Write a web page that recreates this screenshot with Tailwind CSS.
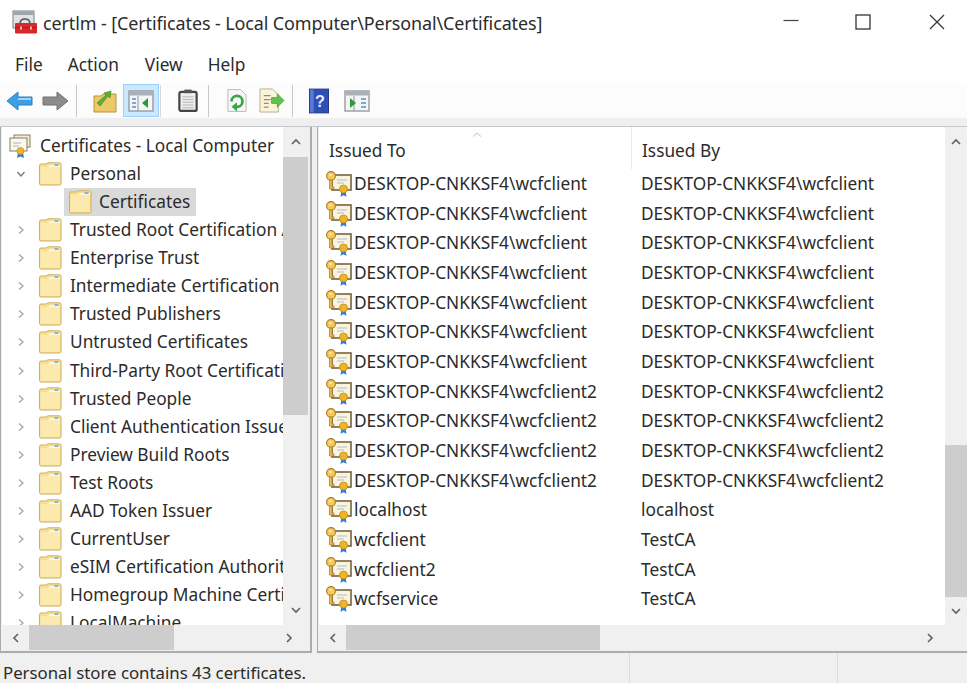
<!doctype html>
<html><head><meta charset="utf-8"><title>certlm</title>
<script src="https://cdn.jsdelivr.net/npm/@tailwindcss/browser@4"></script></head>
<body class="m-0 bg-white">
<svg width="0" height="0" class="absolute">
<defs>
<symbol id="folder" viewBox="0 0 24 24">
<path d="M1.5 3.5 Q1.5 2 3 2 H8 L10 0.8 H21.5 Q23 0.8 23 2.3 V21.5 Q23 23 21.5 23 H3 Q1.5 23 1.5 21.5 Z" fill="#f8de90" stroke="#d2ae63" stroke-width="1"/>
<path d="M2.5 6 H22 V22 H2.5 Z" fill="#fbe9ad"/>
<path d="M2.5 5 H10 L12 3 H22 V5.5 H2.5 Z" fill="#fff6d8"/>
<rect x="16.5" y="2" width="4" height="2" fill="#7cb8e0"/>
</symbol>
<symbol id="cert" viewBox="0 0 26 26">
<rect x="6" y="4" width="19" height="15" fill="#fbf4dd" stroke="#7d6c48" stroke-width="1.7"/>
<path d="M11 9 H21 M11 12 H18" stroke="#a9bdd6" stroke-width="1"/>
<circle cx="5" cy="5" r="4.4" fill="#f6c95c" stroke="#a87c22" stroke-width="1.1"/>
<circle cx="4.5" cy="4" r="1.1" fill="#fff3c4"/>
<path d="M3.5 9 V18 H8 V16 H6 V9 Z" fill="#eebd4e" stroke="#a07a24" stroke-width=".7"/>
<path d="M15.5 20 L14.5 25.8 L17.5 24.2 L20.5 25.8 L19.5 20 Z" fill="#2d7fd6"/>
<circle cx="17.5" cy="18" r="4" fill="#f0b428" stroke="#c08a18" stroke-width=".8"/>
</symbol>
<symbol id="chevr" viewBox="0 0 10 10"><path d="M3 1.5 L7 5 L3 8.5" fill="none" stroke="#a6a6a6" stroke-width="1.3"/></symbol>
<symbol id="pane" viewBox="0 0 26 24">
<rect x="1" y="2" width="24" height="20" fill="#f3f5f7" stroke="#8f959b" stroke-width="1.3"/>
<rect x="1.5" y="2.5" width="23" height="4" fill="#a9b0b7"/>
<path d="M10 7 V22" stroke="#8f959b" stroke-width="1"/>
</symbol>
</defs>
</svg>

<div class="w-[967px] h-[683px] overflow-hidden flex flex-col text-[#2b2b2b] text-[17.3px] leading-[22px] font-['Noto_Sans','Open_Sans',sans-serif]">
  <!-- title -->
  <header class="h-[45px] flex items-center shrink-0 bg-white">
    <svg class="ml-[12px] mt-[-1px] shrink-0" width="26" height="24" viewBox="0 0 26 24">
      <rect x="1" y="1" width="21" height="17" fill="#dfe3e6" stroke="#8d949a" stroke-width="1.2"/>
      <rect x="1.5" y="1.5" width="20" height="3.5" fill="#9ea5ab"/>
      <path d="M8 14 Q8 9 13 9 Q18 9 18 14" fill="none" stroke="#555" stroke-width="1.6"/>
      <rect x="3" y="13" width="22" height="10.5" rx="1" fill="#d8282c"/>
      <rect x="3" y="17" width="22" height="1" fill="#a81b1f"/>
      <rect x="8" y="16.5" width="2" height="3" fill="#f0c0a0"/><rect x="18" y="16.5" width="2" height="3" fill="#f0c0a0"/>
    </svg>
    <span class="ml-[5px] text-[17.95px] tracking-[-0.1px] whitespace-nowrap">certlm - [Certificates - Local Computer\Personal\Certificates]</span>
    <div class="ml-auto flex items-center mt-[-2px]">
      <svg class="mr-[56px]" width="16" height="16" viewBox="0 0 16 16"><path d="M0.5 6.5 H15.5" stroke="#444" stroke-width="1.2"/></svg>
      <svg class="mr-[58px]" width="16" height="16" viewBox="0 0 16 16"><rect x="1" y="1" width="14" height="14" fill="none" stroke="#333" stroke-width="1.3"/></svg>
      <svg class="mr-[22px]" width="16" height="16" viewBox="0 0 16 16"><path d="M1 1 L15 15 M15 1 L1 15" stroke="#333" stroke-width="1.2"/></svg>
    </div>
  </header>
  <!-- menu -->
  <nav class="h-[36px] flex items-center shrink-0 border-b-2 border-[#d4d4d4] box-content pt-[2px] mb-[-2px] relative">
    <span class="ml-[15px] mt-[-1px]">File</span><span class="ml-[25px] mt-[-1px]">Action</span><span class="ml-[26px] mt-[-1px]">View</span><span class="ml-[25px] mt-[-1px]">Help</span>
  </nav>
  <!-- toolbar -->
  <div class="h-[35px] flex items-center shrink-0 bg-[#fcfcfc] relative">
    <svg class="ml-[6px]" width="27" height="22" viewBox="0 0 27 22"><path d="M1 11 L12 2 V7 H26 V15 H12 V20 Z" fill="#3c9fe4" stroke="#2a7fc4" stroke-width="1"/><path d="M12 8 H25 V10 H12 Z" fill="#9fd4f6"/></svg>
    <svg class="ml-[9px]" width="27" height="22" viewBox="0 0 27 22"><path d="M26 11 L15 2 V7 H1 V15 H15 V20 Z" fill="#8b8b8b" stroke="#707070" stroke-width="1"/></svg>
    <div class="ml-[7px] w-px h-[32px] bg-[#c8c8c8]"></div>
    <svg class="ml-[16px]" width="24" height="24" viewBox="0 0 24 24"><path d="M1 7 H8 L10 5 H23 V23 H1 Z" fill="#edc868" stroke="#b7943e"/><path d="M4 14 L13 6 L11 4 L18 2 L17 9 L15 7 L7 17 Z" fill="#5fae3a" stroke="#3c8420" stroke-width=".6"/></svg>
    <div class="ml-[6px] w-[36px] h-[33px] bg-[#cce8ff] border border-[#99d1ff] flex items-center justify-center">
      <svg width="26" height="24"><use href="#pane"/><path d="M20 9 V19 L14 14 Z" fill="#2f9a3a"/><path d="M4 10 H8 M4 14 H8 M4 18 H8" stroke="#5a8fc0" stroke-width="1.6"/></svg>
    </div>
    <div class="ml-[1px] w-px h-[32px] bg-[#d8d8d8]"></div>
    <svg class="ml-[17px]" width="20" height="25" viewBox="0 0 22 26"><rect x="1.5" y="3.5" width="19" height="21" rx="2" fill="#eeeeee" stroke="#444444" stroke-width="2.4"/><rect x="7" y="1" width="8" height="4" fill="#555555"/><path d="M5 9 H17 M5 12 H17 M5 15 H17 M5 18 H17 M5 21 H17" stroke="#b0b0b0"/></svg>
    <div class="ml-[10px] w-px h-[32px] bg-[#c8c8c8]"></div>
    <svg class="ml-[18px]" width="20" height="25" viewBox="0 0 22 26"><path d="M1 1 H15 L21 7 V25 H1 Z" fill="#f6f6f6" stroke="#b5b5b5"/><path d="M5 14 A6 6 0 1 1 11 20" fill="none" stroke="#3aa64a" stroke-width="3"/><path d="M11 15 V25 L5 20 Z" fill="#3aa64a"/></svg>
    <svg class="ml-[12px]" width="26" height="25" viewBox="0 0 27 26"><path d="M1 1 H14 L20 7 V25 H1 Z" fill="#fbf4d8" stroke="#b9ae8a"/><path d="M5 8 H12 M5 12 H12 M5 16 H10 M5 20 H10" stroke="#8d8d78" stroke-width="1.3"/><path d="M13 10 H19 V6 L26 13 L19 20 V16 H13 Z" fill="#62c14e" stroke="#3f9a2f" stroke-width=".7"/></svg>
    <div class="ml-[7px] w-px h-[32px] bg-[#c8c8c8]"></div>
    <svg class="ml-[16px]" width="20" height="26" viewBox="0 0 21 26"><rect x="0.5" y="0.5" width="20" height="25" fill="#2f4fb8" stroke="#1f3585"/><rect x="1" y="1" width="4" height="24" fill="#5a78d6"/><text x="11.5" y="19" font-size="17" font-weight="700" fill="#e9eefc" text-anchor="middle" font-family="Liberation Sans">?</text></svg>
    <svg class="ml-[15px]" width="26" height="24"><use href="#pane"/><path d="M6 9 V19 L12 14 Z" fill="#2f9a3a"/><path d="M17 10 H22 M17 14 H22 M17 18 H22" stroke="#5a8fc0" stroke-width="1.6"/></svg>
  </div>
  <div class="h-[9px] shrink-0 bg-[#efefef] border-b border-[#c4c9cf]"></div>

  <!-- panes -->
  <main class="h-[526px] flex shrink-0 bg-[#f0f0f0]">
    <!-- tree -->
    <section class="w-[312px] shrink-0 flex flex-col border-r-2 border-l border-b-2 border-[#a9adb2] pl-[1px] pr-[2px]">
      <div class="h-[498px] flex shrink-0">
        <div class="w-[281px] shrink-0 overflow-hidden bg-white pt-[5px]">
          <div class="h-[28px] flex items-center whitespace-nowrap">
            <svg class="ml-[5px] shrink-0" width="24" height="24" viewBox="0 0 24 24"><rect x="7" y="1" width="16" height="12" fill="#f3ede0" stroke="#8a7a5c"/><rect x="3" y="4" width="17" height="13" fill="#fbf8ef" stroke="#8a7a5c"/><path d="M6 9 H14 M6 12 H12" stroke="#9fb5d0"/><path d="M11 19 L10 24 L13.5 22.5 L17 24 L16 19 Z" fill="#2d7fd6"/><circle cx="13.5" cy="17" r="3.5" fill="#f0b428" stroke="#c08a18" stroke-width=".7"/></svg>
            <span class="ml-[9px]">Certificates - Local Computer</span>
          </div>
          <div class="h-[28px] flex items-center whitespace-nowrap"><svg class="ml-[14px] shrink-0" width="10" height="10" viewBox="0 0 10 10"><path d="M1.5 3 L5 7 L8.5 3" fill="none" stroke="#777" stroke-width="1.3"/></svg><svg class="ml-[12px] shrink-0" width="24" height="24"><use href="#folder"/></svg><span class="ml-[8px]">Personal</span></div>
          <div class="h-[28px] flex items-center whitespace-nowrap pl-[62px]"><div class="h-[28px] flex items-center bg-[#d9d9d9] pl-[4px] pr-[6px]"><svg class="shrink-0" width="24" height="24"><use href="#folder"/></svg><span class="ml-[7px]">Certificates</span></div></div>
          <div class="h-[28.1px] flex items-center whitespace-nowrap"><svg class="ml-[14px] shrink-0" width="10" height="10"><use href="#chevr"/></svg><svg class="ml-[12px] shrink-0" width="24" height="24"><use href="#folder"/></svg><span class="ml-[8px]">Trusted Root Certification Authorities</span></div>
          <div class="h-[28.1px] flex items-center whitespace-nowrap"><svg class="ml-[14px] shrink-0" width="10" height="10"><use href="#chevr"/></svg><svg class="ml-[12px] shrink-0" width="24" height="24"><use href="#folder"/></svg><span class="ml-[8px]">Enterprise Trust</span></div>
          <div class="h-[28.1px] flex items-center whitespace-nowrap"><svg class="ml-[14px] shrink-0" width="10" height="10"><use href="#chevr"/></svg><svg class="ml-[12px] shrink-0" width="24" height="24"><use href="#folder"/></svg><span class="ml-[8px]">Intermediate Certification Authorities</span></div>
          <div class="h-[28.1px] flex items-center whitespace-nowrap"><svg class="ml-[14px] shrink-0" width="10" height="10"><use href="#chevr"/></svg><svg class="ml-[12px] shrink-0" width="24" height="24"><use href="#folder"/></svg><span class="ml-[8px]">Trusted Publishers</span></div>
          <div class="h-[28.1px] flex items-center whitespace-nowrap"><svg class="ml-[14px] shrink-0" width="10" height="10"><use href="#chevr"/></svg><svg class="ml-[12px] shrink-0" width="24" height="24"><use href="#folder"/></svg><span class="ml-[8px]">Untrusted Certificates</span></div>
          <div class="h-[28.1px] flex items-center whitespace-nowrap"><svg class="ml-[14px] shrink-0" width="10" height="10"><use href="#chevr"/></svg><svg class="ml-[12px] shrink-0" width="24" height="24"><use href="#folder"/></svg><span class="ml-[8px]">Third-Party Root Certification Authorities</span></div>
          <div class="h-[28.1px] flex items-center whitespace-nowrap"><svg class="ml-[14px] shrink-0" width="10" height="10"><use href="#chevr"/></svg><svg class="ml-[12px] shrink-0" width="24" height="24"><use href="#folder"/></svg><span class="ml-[8px]">Trusted People</span></div>
          <div class="h-[28.1px] flex items-center whitespace-nowrap"><svg class="ml-[14px] shrink-0" width="10" height="10"><use href="#chevr"/></svg><svg class="ml-[12px] shrink-0" width="24" height="24"><use href="#folder"/></svg><span class="ml-[8px]">Client Authentication Issuers</span></div>
          <div class="h-[28.1px] flex items-center whitespace-nowrap"><svg class="ml-[14px] shrink-0" width="10" height="10"><use href="#chevr"/></svg><svg class="ml-[12px] shrink-0" width="24" height="24"><use href="#folder"/></svg><span class="ml-[8px]">Preview Build Roots</span></div>
          <div class="h-[28.1px] flex items-center whitespace-nowrap"><svg class="ml-[14px] shrink-0" width="10" height="10"><use href="#chevr"/></svg><svg class="ml-[12px] shrink-0" width="24" height="24"><use href="#folder"/></svg><span class="ml-[8px]">Test Roots</span></div>
          <div class="h-[28.1px] flex items-center whitespace-nowrap"><svg class="ml-[14px] shrink-0" width="10" height="10"><use href="#chevr"/></svg><svg class="ml-[12px] shrink-0" width="24" height="24"><use href="#folder"/></svg><span class="ml-[8px]">AAD Token Issuer</span></div>
          <div class="h-[28.1px] flex items-center whitespace-nowrap"><svg class="ml-[14px] shrink-0" width="10" height="10"><use href="#chevr"/></svg><svg class="ml-[12px] shrink-0" width="24" height="24"><use href="#folder"/></svg><span class="ml-[8px]">CurrentUser</span></div>
          <div class="h-[28.1px] flex items-center whitespace-nowrap"><svg class="ml-[14px] shrink-0" width="10" height="10"><use href="#chevr"/></svg><svg class="ml-[12px] shrink-0" width="24" height="24"><use href="#folder"/></svg><span class="ml-[8px]">eSIM Certification Authorities</span></div>
          <div class="h-[28.1px] flex items-center whitespace-nowrap"><svg class="ml-[14px] shrink-0" width="10" height="10"><use href="#chevr"/></svg><svg class="ml-[12px] shrink-0" width="24" height="24"><use href="#folder"/></svg><span class="ml-[8px]">Homegroup Machine Certificates</span></div>
          <div class="h-[28.1px] flex items-center whitespace-nowrap"><svg class="ml-[14px] shrink-0" width="10" height="10"><use href="#chevr"/></svg><svg class="ml-[12px] shrink-0" width="24" height="24"><use href="#folder"/></svg><span class="ml-[8px]">LocalMachine</span></div>
        </div>
        <div class="w-[25px] shrink-0 bg-[#f0f0f0] flex flex-col">
          <div class="h-[30px] flex items-center justify-center shrink-0"><svg width="12" height="8" viewBox="0 0 12 8"><path d="M2 6 L6 2 L10 6" fill="none" stroke="#606060" stroke-width="1.6"/></svg></div>
          <div class="h-[258px] bg-[#cdcdcd] shrink-0"></div>
          <div class="mt-auto h-[30px] flex items-center justify-center"><svg width="12" height="8" viewBox="0 0 12 8"><path d="M2 2 L6 6 L10 2" fill="none" stroke="#606060" stroke-width="1.6"/></svg></div>
        </div>
      </div>
      <div class="h-[25px] flex items-center bg-[#f0f0f0]">
        <div class="w-[27px] flex justify-center shrink-0"><svg width="8" height="12" viewBox="0 0 8 12"><path d="M6 2 L2 6 L6 10" fill="none" stroke="#606060" stroke-width="1.6"/></svg></div>
        <div class="w-[145px] h-[25px] bg-[#cdcdcd] shrink-0"></div>
        <div class="ml-auto w-[39px] flex justify-center"><svg width="8" height="12" viewBox="0 0 8 12"><path d="M2 2 L6 6 L2 10" fill="none" stroke="#606060" stroke-width="1.6"/></svg></div>
      </div>
    </section>
    <div class="w-[5px] shrink-0 bg-[#f0f0f0]"></div>
    <!-- list -->
    <section class="flex-1 flex flex-col border-l border-b-2 border-[#a9adb2] pl-[1px] min-w-0">
      <div class="h-[498px] flex shrink-0">
        <div class="flex-1 bg-white min-w-0 overflow-hidden">
          <div class="h-[42px] relative flex items-center">
            <svg class="absolute left-[153px] top-[5px]" width="10" height="5" viewBox="0 0 10 5"><path d="M1 4.5 L5 1 L9 4.5" fill="none" stroke="#c0c0c0"/></svg>
            <div class="w-[313px] h-[42px] pl-[10px] pt-[13px] border-r border-[#e8e8e8]">Issued To</div>
            <div class="pl-[10px] pt-[13px] h-[42px]">Issued By</div>
          </div>
          <div>
          <div class="h-[29.7px] flex items-center whitespace-nowrap"><svg class="ml-[7px] shrink-0" width="26" height="26"><use href="#cert"/></svg><span class="w-[287px] ml-[2px]">DESKTOP-CNKKSF4\wcfclient</span><span>DESKTOP-CNKKSF4\wcfclient</span></div>
          <div class="h-[29.7px] flex items-center whitespace-nowrap"><svg class="ml-[7px] shrink-0" width="26" height="26"><use href="#cert"/></svg><span class="w-[287px] ml-[2px]">DESKTOP-CNKKSF4\wcfclient</span><span>DESKTOP-CNKKSF4\wcfclient</span></div>
          <div class="h-[29.7px] flex items-center whitespace-nowrap"><svg class="ml-[7px] shrink-0" width="26" height="26"><use href="#cert"/></svg><span class="w-[287px] ml-[2px]">DESKTOP-CNKKSF4\wcfclient</span><span>DESKTOP-CNKKSF4\wcfclient</span></div>
          <div class="h-[29.7px] flex items-center whitespace-nowrap"><svg class="ml-[7px] shrink-0" width="26" height="26"><use href="#cert"/></svg><span class="w-[287px] ml-[2px]">DESKTOP-CNKKSF4\wcfclient</span><span>DESKTOP-CNKKSF4\wcfclient</span></div>
          <div class="h-[29.7px] flex items-center whitespace-nowrap"><svg class="ml-[7px] shrink-0" width="26" height="26"><use href="#cert"/></svg><span class="w-[287px] ml-[2px]">DESKTOP-CNKKSF4\wcfclient</span><span>DESKTOP-CNKKSF4\wcfclient</span></div>
          <div class="h-[29.7px] flex items-center whitespace-nowrap"><svg class="ml-[7px] shrink-0" width="26" height="26"><use href="#cert"/></svg><span class="w-[287px] ml-[2px]">DESKTOP-CNKKSF4\wcfclient</span><span>DESKTOP-CNKKSF4\wcfclient</span></div>
          <div class="h-[29.7px] flex items-center whitespace-nowrap"><svg class="ml-[7px] shrink-0" width="26" height="26"><use href="#cert"/></svg><span class="w-[287px] ml-[2px]">DESKTOP-CNKKSF4\wcfclient</span><span>DESKTOP-CNKKSF4\wcfclient</span></div>
          <div class="h-[29.7px] flex items-center whitespace-nowrap"><svg class="ml-[7px] shrink-0" width="26" height="26"><use href="#cert"/></svg><span class="w-[287px] ml-[2px]">DESKTOP-CNKKSF4\wcfclient2</span><span>DESKTOP-CNKKSF4\wcfclient2</span></div>
          <div class="h-[29.7px] flex items-center whitespace-nowrap"><svg class="ml-[7px] shrink-0" width="26" height="26"><use href="#cert"/></svg><span class="w-[287px] ml-[2px]">DESKTOP-CNKKSF4\wcfclient2</span><span>DESKTOP-CNKKSF4\wcfclient2</span></div>
          <div class="h-[29.7px] flex items-center whitespace-nowrap"><svg class="ml-[7px] shrink-0" width="26" height="26"><use href="#cert"/></svg><span class="w-[287px] ml-[2px]">DESKTOP-CNKKSF4\wcfclient2</span><span>DESKTOP-CNKKSF4\wcfclient2</span></div>
          <div class="h-[29.7px] flex items-center whitespace-nowrap"><svg class="ml-[7px] shrink-0" width="26" height="26"><use href="#cert"/></svg><span class="w-[287px] ml-[2px]">DESKTOP-CNKKSF4\wcfclient2</span><span>DESKTOP-CNKKSF4\wcfclient2</span></div>
          <div class="h-[29.7px] flex items-center whitespace-nowrap"><svg class="ml-[7px] shrink-0" width="26" height="26"><use href="#cert"/></svg><span class="w-[287px] ml-[2px]">localhost</span><span>localhost</span></div>
          <div class="h-[29.7px] flex items-center whitespace-nowrap"><svg class="ml-[7px] shrink-0" width="26" height="26"><use href="#cert"/></svg><span class="w-[287px] ml-[2px]">wcfclient</span><span>TestCA</span></div>
          <div class="h-[29.7px] flex items-center whitespace-nowrap"><svg class="ml-[7px] shrink-0" width="26" height="26"><use href="#cert"/></svg><span class="w-[287px] ml-[2px]">wcfclient2</span><span>TestCA</span></div>
          <div class="h-[29.7px] flex items-center whitespace-nowrap"><svg class="ml-[7px] shrink-0" width="26" height="26"><use href="#cert"/></svg><span class="w-[287px] ml-[2px]">wcfservice</span><span>TestCA</span></div>
          </div>
        </div>
        <div class="w-[22px] shrink-0 bg-[#f0f0f0] flex flex-col">
          <div class="h-[30px] flex items-center justify-center shrink-0"><svg width="12" height="8" viewBox="0 0 12 8"><path d="M2 6 L6 2 L10 6" fill="none" stroke="#606060" stroke-width="1.6"/></svg></div>
          <div class="mt-[288px] h-[152px] bg-[#cdcdcd] shrink-0"></div>
          <div class="mt-auto h-[28px] flex items-center justify-center"><svg width="12" height="8" viewBox="0 0 12 8"><path d="M2 2 L6 6 L10 2" fill="none" stroke="#606060" stroke-width="1.6"/></svg></div>
        </div>
      </div>
      <div class="h-[25px] flex items-center bg-[#f0f0f0]">
        <div class="w-[27px] flex justify-center shrink-0"><svg width="8" height="12" viewBox="0 0 8 12"><path d="M6 2 L2 6 L6 10" fill="none" stroke="#606060" stroke-width="1.6"/></svg></div>
        <div class="w-[254px] h-[25px] bg-[#cdcdcd] shrink-0"></div>
        <div class="ml-auto mr-[33px] flex justify-center"><svg width="8" height="12" viewBox="0 0 8 12"><path d="M2 2 L6 6 L2 10" fill="none" stroke="#606060" stroke-width="1.6"/></svg></div>
      </div>
    </section>
  </main>
  <!-- status -->
  <footer class="flex-1 flex bg-[#f0f0f0] text-[16.8px]">
    <div class="w-[630px] pl-[3px] pt-[8px] border-r border-[#dcdcdc] whitespace-nowrap leading-[24px]">Personal store contains 43 certificates.</div>
    <div class="w-[208px] border-r border-[#dcdcdc]"></div>
  </footer>
</div>
</body></html>
